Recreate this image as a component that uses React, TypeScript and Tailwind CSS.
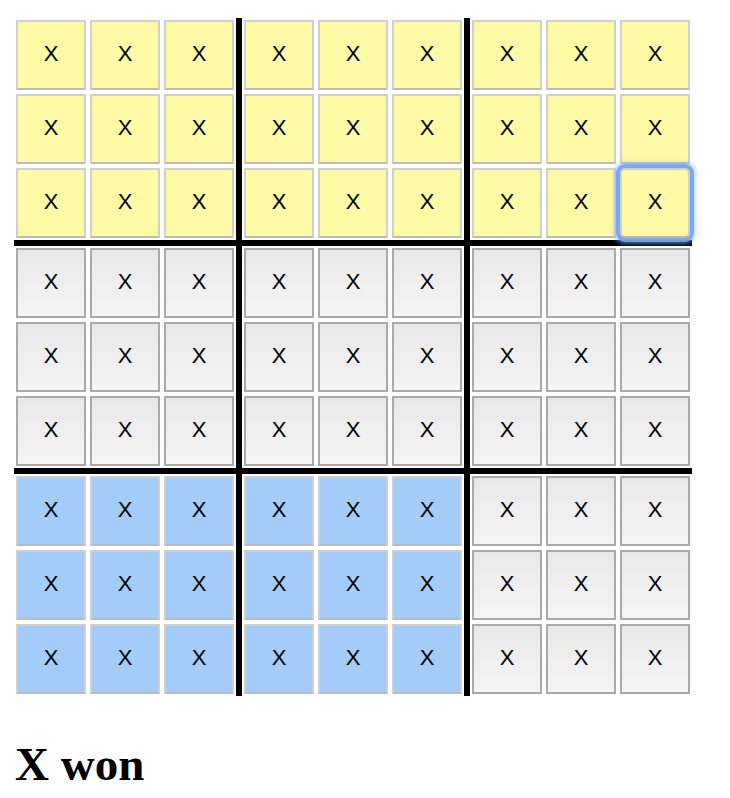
import React from "react";

type Tint = "yellow" | "gray" | "blue";

// board tint by position in the big 3x3
const tints: Tint[][] = [
  ["yellow", "yellow", "yellow"],
  ["gray", "gray", "gray"],
  ["blue", "blue", "gray"],
];

const cellClass: Record<Tint, string> = {
  yellow: "bg-[#fffaa6] border-[#d0d0d0] border-b-[#bbbbbb]",
  gray: "bg-gradient-to-b from-[#e8e8e8] to-[#f5f5f5] border-[#aaaaaa]",
  blue: "bg-[#a3ccf8] border-[#d0d0d0] border-b-[#bbbbbb]",
};

const Cell = ({ tint, focused }: { tint: Tint; focused: boolean }) => (
  <button
    className={
      "relative m-[2px] flex h-[70px] w-[70px] items-center justify-center border-2 text-[22px] leading-none text-black " +
      cellClass[tint] +
      (focused
        ? " z-10 rounded-[5px] shadow-[0_0_0_4px_rgba(110,165,240,0.9),0_0_4px_6px_rgba(140,185,245,0.55)]"
        : "")
    }
    style={{ fontFamily: '"Liberation Sans", Arial, sans-serif' }}
  >
    <span className="-mt-[3px]">X</span>
  </button>
);

const Board = ({ tint, focusIndex }: { tint: Tint; focusIndex: number }) => (
  <div className="grid grid-cols-3">
    {Array.from({ length: 9 }).map((_, i) => (
      <Cell key={i} tint={tint} focused={i === focusIndex} />
    ))}
  </div>
);

export default function App() {
  return (
    <div className="min-h-screen bg-white pl-[14px] pt-[18px]">
      <div className="flex w-[678px] flex-col">
        {tints.map((row, r) => (
          <React.Fragment key={r}>
            {r > 0 && <div className="h-[6px] bg-black" />}
            <div className="flex">
              {row.map((tint, c) => (
                <React.Fragment key={c}>
                  {c > 0 && <div className="w-[6px] bg-black" />}
                  <Board tint={tint} focusIndex={r === 0 && c === 2 ? 8 : -1} />
                </React.Fragment>
              ))}
            </div>
          </React.Fragment>
        ))}
      </div>
      <h1
        className="mt-[42px] pl-[1px] text-[47px] font-bold leading-[52px] text-black"
        style={{ fontFamily: '"Liberation Serif", "Times New Roman", serif' }}
      >
        X won
      </h1>
    </div>
  );
}
